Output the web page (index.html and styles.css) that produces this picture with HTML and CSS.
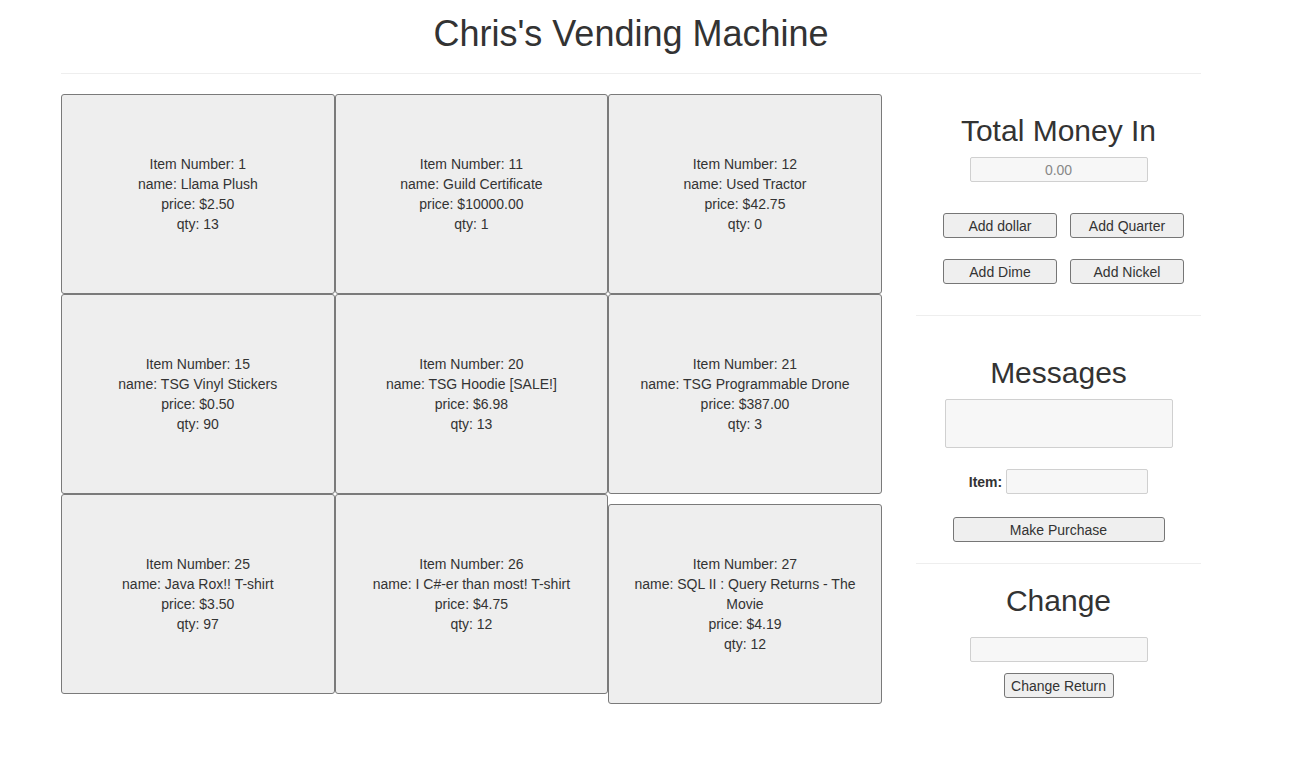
FILE: index.html
```html
<!DOCTYPE html>
<html lang="en">
<head>
<meta charset="utf-8">
<title>Chris's Vending Machine</title>
<link rel="stylesheet" href="styles.css">
</head>
<body>
<div class="container">
  <h1 class="page-title">Chris's Vending Machine</h1>
  <hr class="rule">
  <div class="layout">
    <div class="items">
      <div class="item">
        <div>Item Number: 1</div>
        <div>name: Llama Plush</div>
        <div>price: $2.50</div>
        <div>qty: 13</div>
      </div>
      <div class="item">
        <div>Item Number: 11</div>
        <div>name: Guild Certificate</div>
        <div>price: $10000.00</div>
        <div>qty: 1</div>
      </div>
      <div class="item">
        <div>Item Number: 12</div>
        <div>name: Used Tractor</div>
        <div>price: $42.75</div>
        <div>qty: 0</div>
      </div>
      <div class="item">
        <div>Item Number: 15</div>
        <div>name: TSG Vinyl Stickers</div>
        <div>price: $0.50</div>
        <div>qty: 90</div>
      </div>
      <div class="item">
        <div>Item Number: 20</div>
        <div>name: TSG Hoodie [SALE!]</div>
        <div>price: $6.98</div>
        <div>qty: 13</div>
      </div>
      <div class="item">
        <div>Item Number: 21</div>
        <div>name: TSG Programmable Drone</div>
        <div>price: $387.00</div>
        <div>qty: 3</div>
      </div>
      <div class="item">
        <div>Item Number: 25</div>
        <div>name: Java Rox!! T-shirt</div>
        <div>price: $3.50</div>
        <div>qty: 97</div>
      </div>
      <div class="item">
        <div>Item Number: 26</div>
        <div>name: I C#-er than most! T-shirt</div>
        <div>price: $4.75</div>
        <div>qty: 12</div>
      </div>
      <div class="item">
        <div>Item Number: 27</div>
        <div>name: SQL II : Query Returns - The Movie</div>
        <div>price: $4.19</div>
        <div>qty: 12</div>
      </div>
    </div>
    <aside class="sidebar">
      <section class="panel">
        <h2 class="panel-title title-money">Total Money In</h2>
        <input class="field field-money" type="text" value="0.00" readonly>
        <div class="coin-buttons">
          <button class="btn btn-coin" type="button">Add dollar</button>
          <button class="btn btn-coin" type="button">Add Quarter</button>
          <button class="btn btn-coin" type="button">Add Dime</button>
          <button class="btn btn-coin" type="button">Add Nickel</button>
        </div>
      </section>
      <hr class="side-rule side-rule-1">
      <section class="panel">
        <h2 class="panel-title title-messages">Messages</h2>
        <textarea class="field field-messages" readonly></textarea>
        <div class="item-row">
          <label class="item-label" for="item">Item:</label>
          <input class="field field-item" id="item" type="text">
        </div>
        <button class="btn btn-purchase" type="button">Make Purchase</button>
      </section>
      <hr class="side-rule side-rule-2">
      <section class="panel">
        <h2 class="panel-title title-change">Change</h2>
        <input class="field field-change" type="text" readonly>
        <button class="btn btn-return" type="button">Change Return</button>
      </section>
    </aside>
  </div>
</div>
</body>
</html>
```

FILE: styles.css
```css
* {
  box-sizing: border-box;
}

html, body {
  margin: 0;
  padding: 0;
  background: #fff;
}

body {
  font-family: "Liberation Sans", Arial, Helvetica, sans-serif;
  font-size: 14px;
  line-height: 20px;
  color: #333;
  padding-right: 32px;
}

.container {
  width: 1140px;
  margin: 0 auto;
}

.page-title {
  margin: 14px 0 0;
  font-size: 36px;
  font-weight: 500;
  line-height: 39.6px;
  text-align: center;
}

.rule {
  margin: 19px 0 0;
  border: 0;
  border-top: 1px solid #eee;
  height: 0;
}

.layout {
  display: flex;
  align-items: flex-start;
  margin-top: 20px;
}

.items {
  width: 855px;
  display: flex;
  flex-wrap: wrap;
  align-items: baseline;
}

.item {
  width: 32%;
  height: 200px;
  display: flex;
  flex-direction: column;
  justify-content: center;
  padding: 0 10px;
  background: #eee;
  border: 1px solid #7a7a7a;
  border-radius: 3px;
  text-align: center;
}

.sidebar {
  width: 285px;
  text-align: center;
}

.panel {
  display: flex;
  flex-direction: column;
  align-items: center;
}

.panel-title {
  font-size: 30px;
  font-weight: 500;
  line-height: 33px;
  margin: 0;
}

.title-money {
  margin: 20px 0 10px;
}

.title-messages {
  margin: 40px 0 10px;
}

.title-change {
  margin: 20px 0 20px;
}

.field {
  display: block;
  height: 25px;
  padding: 3px 6px 1px;
  background: #f7f7f7;
  border: 1px solid #d0d0d0;
  border-radius: 2px;
  font-family: inherit;
  font-size: 14px;
  line-height: 19px;
  color: #333;
  outline: none;
}

.field-money {
  width: 178px;
  text-align: center;
  color: #888;
}

.field-messages {
  width: 228px;
  height: 49px;
  resize: none;
}

.field-item {
  width: 142px;
}

.field-change {
  width: 178px;
}

.item-row {
  display: flex;
  align-items: center;
  gap: 4px;
  margin-top: 21px;
}

.item-label {
  font-weight: bold;
  line-height: 20px;
  padding-top: 2px;
}

.btn {
  height: 25px;
  padding: 2px 6px 0;
  background: #efefef;
  border: 1px solid #767676;
  border-radius: 3px;
  font-family: inherit;
  font-size: 14px;
  line-height: 20px;
  color: #333;
}

.coin-buttons {
  display: grid;
  grid-template-columns: 114px 114px;
  column-gap: 13px;
  row-gap: 21px;
  margin-top: 31px;
  padding-left: 10px;
}

.btn-coin {
  width: 114px;
}

.btn-purchase {
  width: 212px;
  margin-top: 23px;
}

.btn-return {
  width: 110px;
  margin-top: 11px;
}

.side-rule {
  margin: 0;
  border: 0;
  border-top: 1px solid #eee;
  height: 0;
}

.side-rule-1 {
  margin-top: 31px;
}

.side-rule-2 {
  margin-top: 21px;
}
```
